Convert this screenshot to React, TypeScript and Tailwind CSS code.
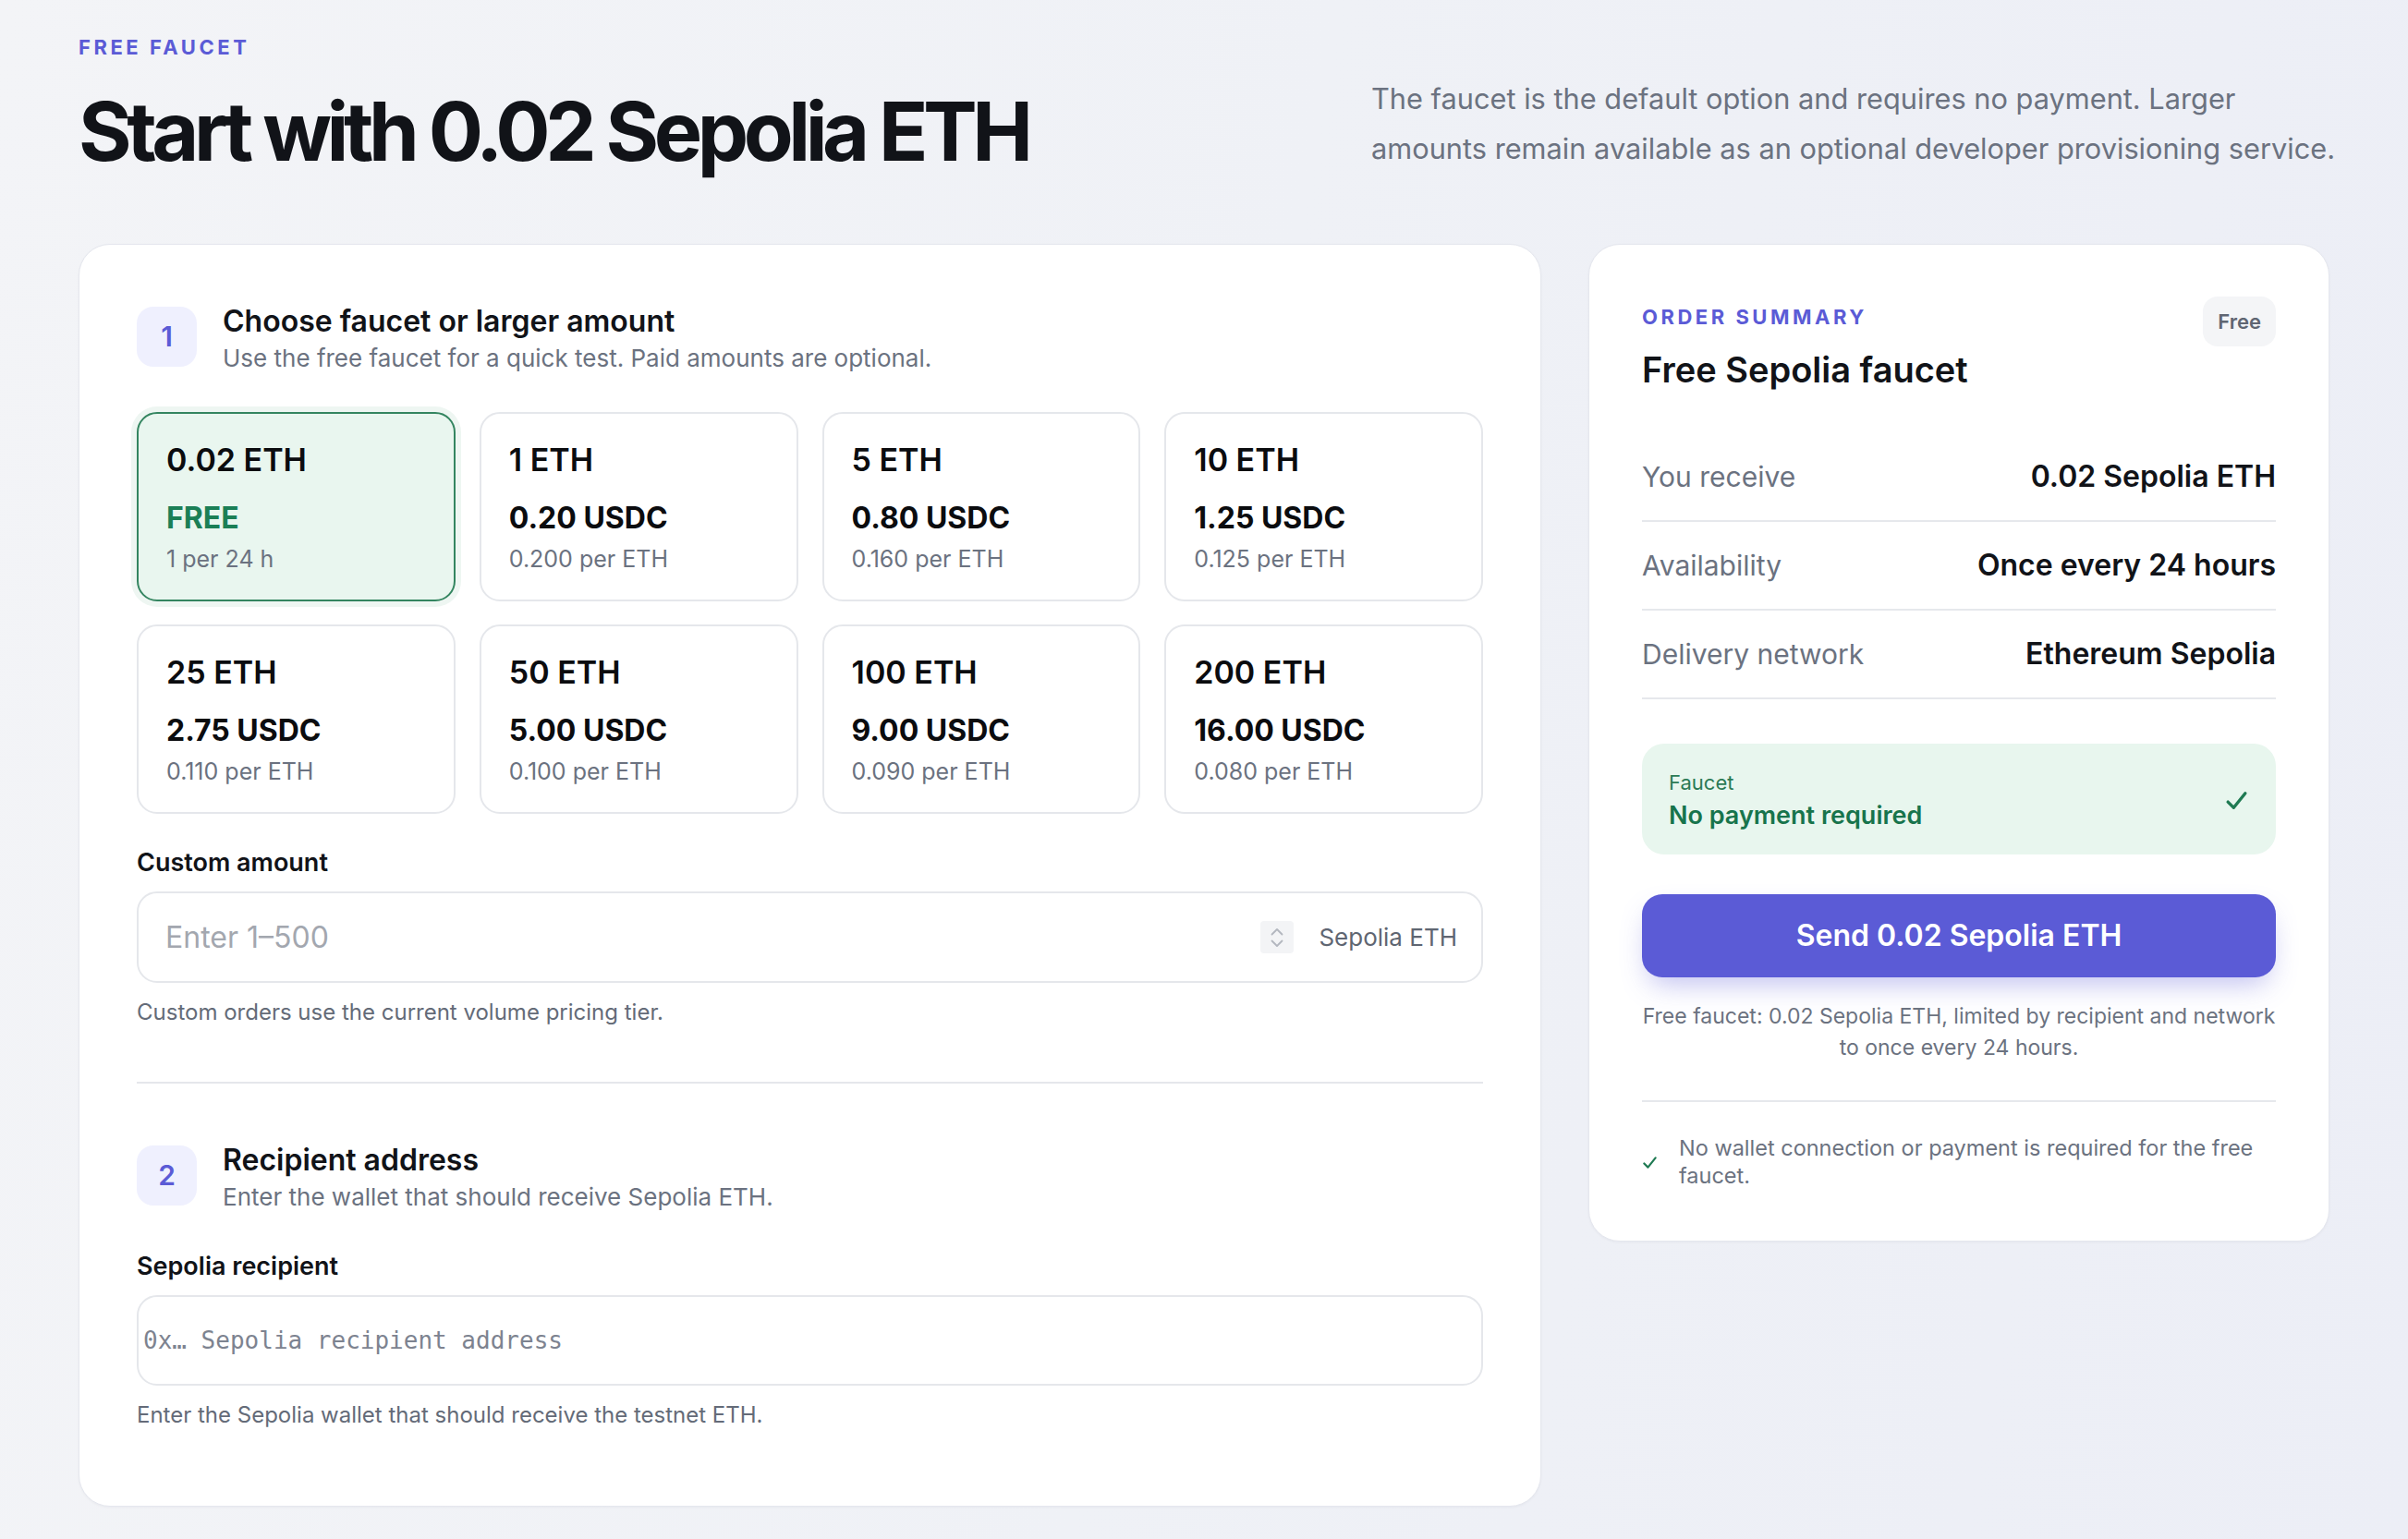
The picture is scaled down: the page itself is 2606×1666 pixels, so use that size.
import React from "react";

type Tier = { amount: string; price: string; per: string; free?: boolean };

const tiers: Tier[] = [
  { amount: "0.02 ETH", price: "FREE", per: "1 per 24 h", free: true },
  { amount: "1 ETH", price: "0.20 USDC", per: "0.200 per ETH" },
  { amount: "5 ETH", price: "0.80 USDC", per: "0.160 per ETH" },
  { amount: "10 ETH", price: "1.25 USDC", per: "0.125 per ETH" },
  { amount: "25 ETH", price: "2.75 USDC", per: "0.110 per ETH" },
  { amount: "50 ETH", price: "5.00 USDC", per: "0.100 per ETH" },
  { amount: "100 ETH", price: "9.00 USDC", per: "0.090 per ETH" },
  { amount: "200 ETH", price: "16.00 USDC", per: "0.080 per ETH" },
];

function Check({ className }: { className?: string }) {
  return (
    <svg viewBox="0 0 24 22" className={className} fill="none">
      <path d="M3 12.5 L9 18.5 L21 3.5" stroke="currentColor" strokeWidth="3.2" strokeLinecap="round" strokeLinejoin="round" />
    </svg>
  );
}

function StepHeader({ n, title, sub }: { n: string; title: string; sub: string }) {
  return (
    <div className="flex items-start gap-[28px]">
      <div className="flex h-[65px] w-[65px] shrink-0 items-center justify-center rounded-[18px] bg-[#eff0fe] text-[30px] font-semibold text-[#5b5bd6]">
        {n}
      </div>
      <div className="-mt-[2px]">
        <div className="text-[32px] font-semibold leading-[36px] text-[#111318]">{title}</div>
        <div className="mt-[5px] text-[26px] leading-[34px] text-[#6b7280]">{sub}</div>
      </div>
    </div>
  );
}

function TierTile({ t }: { t: Tier }) {
  return (
    <div
      className={
        t.free
          ? "h-[205px] rounded-[22px] border-2 border-[#348560] bg-[#e9f6ef] pl-[30px] pt-[30px] shadow-[0_0_0_6px_#eef6f2]"
          : "h-[205px] rounded-[22px] border-2 border-[#e5e7eb] bg-white pl-[30px] pt-[30px]"
      }
    >
      <div className="text-[34px] font-semibold leading-[40px] text-[#0b0c0f]">{t.amount}</div>
      <div
        className={
          t.free
            ? "mt-[24px] text-[32px] font-bold leading-[38px] text-[#1b7f56]"
            : "mt-[24px] text-[32px] font-bold leading-[38px] text-[#0b0c0f]"
        }
      >
        {t.price}
      </div>
      <div className="mt-[9px] text-[25px] leading-[32px] text-[#6b7280]">{t.per}</div>
    </div>
  );
}

function Row({ label, value }: { label: string; value: string }) {
  return (
    <div className="flex items-center justify-between border-b-2 border-[#e6e8ec] py-[29px] leading-[36px]">
      <span className="text-[30px] text-[#6b7280]">{label}</span>
      <span className="text-[32px] font-semibold text-[#111318]">{value}</span>
    </div>
  );
}

export default function App() {
  return (
    <div className="min-h-screen w-full bg-[linear-gradient(100deg,#f3f4f7_0%,#eff1f6_50%,#eceef6_100%)] px-[85px] pb-[30px] pt-[37px] font-['Inter',sans-serif]">
      <header className="flex h-[149px] items-start justify-between">
        <div>
          <p className="text-[22px] font-bold leading-[28px] tracking-[0.16em] text-[#5b5bd6]">FREE FAUCET</p>
          <h1 className="mt-[33px] text-[88px] font-bold leading-[88px] tracking-[-0.062em] text-[#111318]">
            Start with 0.02 Sepolia ETH
          </h1>
        </div>
        <p className="mt-[43px] w-[1037px] whitespace-nowrap text-[30.75px] leading-[54px] text-[#6b7280]">
          The faucet is the default option and requires no payment. Larger
          <br />
          amounts remain available as an optional developer provisioning service.
        </p>
      </header>

      <div className="mt-[78px] grid grid-cols-[minmax(0,1fr)_802px] items-start gap-[51px]">
        {/* Left card */}
        <section className="rounded-[34px] border border-[#e5e7ee] bg-white px-[62px] pb-[83px] pt-[67px] shadow-[0_1px_3px_rgba(15,23,42,0.04)]">
          <StepHeader n="1" title="Choose faucet or larger amount" sub="Use the free faucet for a quick test. Paid amounts are optional." />

          <div className="mt-[41px] grid grid-cols-4 gap-x-[26px] gap-y-[25px]">
            {tiers.map((t) => (
              <TierTile key={t.amount} t={t} />
            ))}
          </div>

          <div className="mt-[37px] text-[27px] font-semibold leading-[32px] text-[#111318]">Custom amount</div>
          <div className="mt-[15px] flex h-[99px] items-center rounded-[22px] border-2 border-[#e5e7eb] pl-[29px] pr-[26px]">
            <input
              type="text"
              placeholder="Enter 1–500"
              className="min-w-0 flex-1 bg-transparent text-[32px] text-[#111318] outline-none placeholder:text-[#a3a7af]"
            />
            <div className="flex h-[35px] w-[36px] flex-col items-center justify-center rounded-[4px] bg-[#f3f4f6]">
              <svg viewBox="0 0 18 28" className="h-[28px] w-[18px]" fill="none">
                <path d="M3.5 10.5 L9 5 L14.5 10.5" stroke="#b3b7bf" strokeWidth="1.8" strokeLinecap="round" strokeLinejoin="round" />
                <path d="M3.5 17.5 L9 23 L14.5 17.5" stroke="#b3b7bf" strokeWidth="1.8" strokeLinecap="round" strokeLinejoin="round" />
              </svg>
            </div>
            <span className="ml-[27px] text-[26px] text-[#5f6672]">Sepolia ETH</span>
          </div>
          <p className="mt-[17px] text-[24px] leading-[30px] text-[#646b78]">Custom orders use the current volume pricing tier.</p>

          <div className="mt-[60px] h-[2px] bg-[#e5e7eb]" />

          <div className="mt-[67px]">
            <StepHeader n="2" title="Recipient address" sub="Enter the wallet that should receive Sepolia ETH." />
          </div>

          <div className="mt-[42px] text-[27px] font-semibold leading-[32px] text-[#111318]">Sepolia recipient</div>
          <div className="mt-[15px] flex h-[98px] items-center rounded-[22px] border-2 border-[#e5e7eb] px-[5px]">
            <input
              type="text"
              placeholder="0x… Sepolia recipient address"
              className="min-w-0 flex-1 bg-transparent font-['DejaVu_Sans_Mono',monospace] text-[26px] text-[#111318] outline-none placeholder:text-[#7d8390]"
            />
          </div>
          <p className="mt-[17px] text-[24px] leading-[30px] text-[#646b78]">Enter the Sepolia wallet that should receive the testnet ETH.</p>
        </section>

        {/* Right card */}
        <aside className="rounded-[34px] border border-[#e5e7ee] bg-white px-[57px] pb-[55px] pt-[56px] shadow-[0_1px_3px_rgba(15,23,42,0.04)]">
          <div className="flex items-start justify-between">
            <div>
              <p className="mt-[8px] text-[22px] font-bold leading-[28px] tracking-[0.16em] text-[#5b5bd6]">ORDER SUMMARY</p>
              <h2 className="mt-[21px] text-[38px] font-semibold leading-[44px] text-[#111318]">Free Sepolia faucet</h2>
            </div>
            <span className="flex h-[54px] items-center rounded-[16px] bg-[#f4f5f7] px-[16px] text-[22px] font-semibold text-[#5f6672]">
              Free
            </span>
          </div>

          <div className="mt-[47px]">
            <Row label="You receive" value="0.02 Sepolia ETH" />
            <Row label="Availability" value="Once every 24 hours" />
            <Row label="Delivery network" value="Ethereum Sepolia" />
          </div>

          <div className="mt-[48px] flex items-center justify-between rounded-[24px] bg-[#e8f6ee] pb-[26px] pl-[29px] pr-[30px] pt-[28px]">
            <div>
              <div className="text-[22px] leading-[28px] text-[#2b7a55]">Faucet</div>
              <div className="mt-[6px] text-[27px] font-semibold leading-[32px] text-[#17744c]">No payment required</div>
            </div>
            <Check className="h-[23px] w-[25px] text-[#1f7a52]" />
          </div>

          <button className="mt-[43px] flex h-[90px] w-full items-center justify-center rounded-[22px] bg-[#5b5bd6] text-[32px] font-semibold text-white shadow-[0_14px_30px_-8px_rgba(91,91,214,0.4)]">
            Send 0.02 Sepolia ETH
          </button>

          <p className="mt-[25px] text-center text-[23px] leading-[34px] text-[#6b7280]">
            Free faucet: 0.02 Sepolia ETH, limited by recipient and network
            <br />
            to once every 24 hours.
          </p>

          <div className="mt-[40px] h-[2px] bg-[#e6e8ec]" />

          <div className="mt-[35px] flex items-center gap-[23px]">
            <Check className="h-[15px] w-[17px] shrink-0 text-[#1f7a52]" />
            <p className="text-[23.5px] leading-[30px] text-[#6b7280]">
              No wallet connection or payment is required for the free faucet.
            </p>
          </div>
        </aside>
      </div>
    </div>
  );
}
